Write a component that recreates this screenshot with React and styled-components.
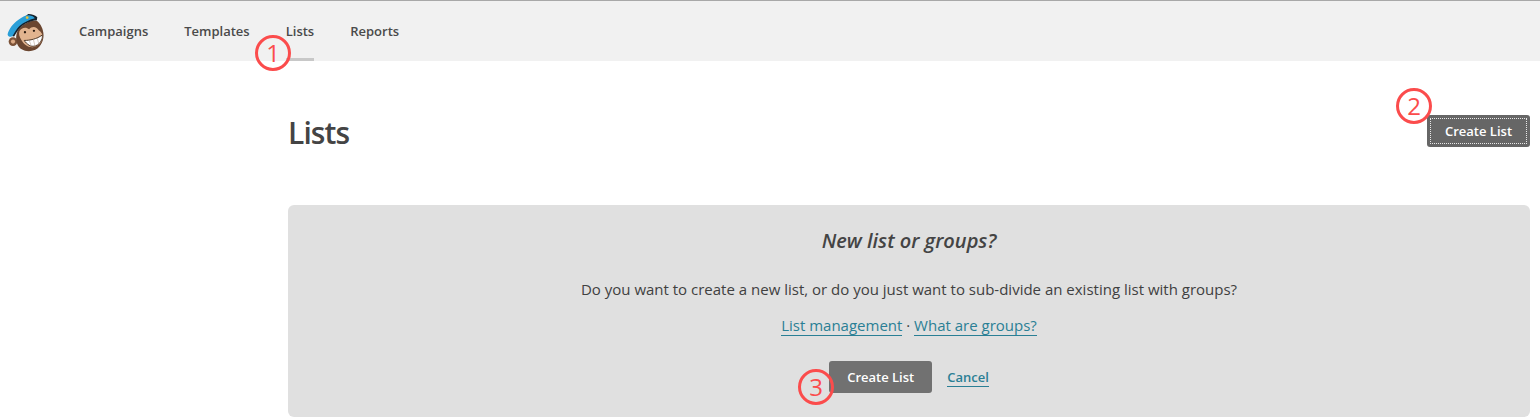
import React from 'react';
import styled, { createGlobalStyle } from 'styled-components';

const GlobalStyle = createGlobalStyle`
  html, body {
    margin: 0;
    padding: 0;
    background: #fff;
    font-family: "Open Sans", "Liberation Sans", sans-serif;
    color: #404040;
  }
`;

const Page = styled.div`
  width: 1540px;
  height: 418px;
  overflow: hidden;
  position: relative;
`;

const NavBar = styled.nav`
  display: flex;
  align-items: stretch;
  height: 60px;
  box-sizing: content-box;
  background: #f1f1f1;
  border-top: 1px solid #a8a8a8;
  padding-left: 5px;
`;

const LogoWrap = styled.div`
  display: flex;
  align-items: center;
  width: 74px;
  padding-top: 2px;
  box-sizing: border-box;
`;

const NavItems = styled.div`
  display: flex;
  gap: 36px;
`;

const NavItem = styled.a`
  display: flex;
  align-items: center;
  height: 60px;
  box-sizing: border-box;
  padding-top: 3px;
  font-size: 13px;
  font-weight: 600;
  color: #4a4a4a;
  border-bottom: 3px solid ${(p) => (p.$active ? '#c8c8c8' : 'transparent')};
`;

const Main = styled.main`
  padding: 0 10px 0 288px;
`;

const Header = styled.header`
  display: flex;
  justify-content: space-between;
  align-items: flex-start;
  height: 144px;
  padding-top: 54px;
  box-sizing: border-box;
`;

const Title = styled.h1`
  margin: 0;
  font-size: 30px;
  line-height: 36px;
  font-weight: 600;
  letter-spacing: -0.9px;
  color: #444;
`;

const Button = styled.button`
  display: inline-flex;
  align-items: center;
  justify-content: center;
  width: ${(p) => p.$width}px;
  height: 32px;
  padding: 0;
  border: 0;
  border-radius: 3px;
  background: ${(p) => (p.$focused ? '#666' : '#717171')};
  color: #fff;
  font-family: inherit;
  font-size: 13px;
  font-weight: 600;
  ${(p) => p.$focused && `
    outline: 1px dotted #e8e8e8;
    outline-offset: -4px;
  `}
`;

const Panel = styled.section`
  display: flex;
  flex-direction: column;
  align-items: center;
  height: 212px;
  box-sizing: border-box;
  padding-top: 22px;
  background: #e0e0e0;
  border-radius: 6px;
`;

const PanelTitle = styled.h2`
  margin: 0;
  font-size: 20px;
  line-height: 27px;
  font-weight: 600;
  font-style: italic;
  color: #444;
`;

const PanelText = styled.p`
  margin: 25px 0 0;
  font-size: 15px;
  line-height: 20px;
  color: #404040;
`;

const LinkRow = styled.p`
  margin: 16px 0 0;
  font-size: 15px;
  line-height: 20px;
  color: #404040;
`;

const TextLink = styled.a`
  color: #2a7f95;
  font-weight: ${(p) => (p.$bold ? 600 : 400)};
  font-size: ${(p) => (p.$bold ? '13px' : '15px')};
  border-bottom: 1px solid #2a7f95;
`;

const Actions = styled.div`
  display: flex;
  align-items: center;
  gap: 15px;
  margin-top: 26px;
`;

const Marker = styled.div`
  position: absolute;
  left: ${(p) => p.$x}px;
  top: ${(p) => p.$y}px;
  width: 36px;
  height: 36px;
  box-sizing: border-box;
  display: flex;
  align-items: center;
  justify-content: center;
  border: 3px solid #fb4c4c;
  border-radius: 50%;
  color: #fb4c4c;
  font-family: "Open Sans", sans-serif;
  font-size: 24px;
  line-height: 1;
`;

const Logo = () => (
  <svg width="40" height="44" viewBox="0 0 41.500 45.500">
    <circle cx="8.300" cy="32.700" r="4.500" fill="#7b5238" />
    <circle cx="8.300" cy="32.700" r="2.200" fill="#dcaa85" />
    <path d="M14 20 C18 15 27 10 33 11 C37 14 40 20 40 26 C40 33 36 40 29 42 C22 44 15 41 13 36 C11 31 11 25 14 20 Z" fill="#6b4630" />
    <path d="M15 22 C17 18 22 17 25 20 C28 16 33 17 35 21 C38 23 39.500 26 39 29 C38 34 34 38 29 38.500 C24 39 19 35 17 31 C15 28 14 25 15 22 Z" fill="#e2b48f" />
    <path d="M20 31.500 C26 31.500 33 30 38.500 26 C39.500 29 37.500 33 34 36 C31 38 27 38 25 36.500 C23 35 21 33.500 20 31.500 Z" fill="#fff" stroke="#3b2617" strokeWidth="0.9" />
    <path d="M25 31 L27 36.500 M29.500 30.500 L31 37 M33.500 29 L35 35" stroke="#b9a595" strokeWidth="0.6" />
    <circle cx="20.700" cy="23" r="1.200" fill="#2a1a10" />
    <circle cx="30" cy="21.500" r="1.200" fill="#2a1a10" />
    <path d="M24 4.200 C28 4.300 32 5.500 33.500 7.500 L33 10.500 C27 11 20 14 16 18 C13 21 11 25 9.500 27.500 L7 27 L15 12 Z" fill="#16232d" />
    <path d="M2.700 25 C4 20 8 14 14 10 C18 7 22 5 25 5.500 C28 6 30 7 31 8.500 C25 10 19 13 15 16.500 C12 19.500 10 23 8 26.700 C6.500 28.500 3 28 2.700 25 Z" fill="#2a9fd8" />
    <circle cx="23" cy="7.800" r="1.400" fill="#f2c230" />
  </svg>
);

export default function App() {
  return (
    <Page>
      <GlobalStyle />
      <NavBar>
        <LogoWrap>
          <Logo />
        </LogoWrap>
        <NavItems>
          <NavItem>Campaigns</NavItem>
          <NavItem>Templates</NavItem>
          <NavItem $active>Lists</NavItem>
          <NavItem>Reports</NavItem>
        </NavItems>
      </NavBar>
      <Main>
        <Header>
          <Title>Lists</Title>
          <Button $width={103} $focused>Create List</Button>
        </Header>
        <Panel>
          <PanelTitle>New list or groups?</PanelTitle>
          <PanelText>Do you want to create a new list, or do you just want to sub-divide an existing list with groups?</PanelText>
          <LinkRow>
            <TextLink>List management</TextLink> · <TextLink>What are groups?</TextLink>
          </LinkRow>
          <Actions>
            <Button $width={103}>Create List</Button>
            <TextLink $bold>Cancel</TextLink>
          </Actions>
        </Panel>
      </Main>
      <Marker $x={255} $y={35}>1</Marker>
      <Marker $x={1396} $y={88}>2</Marker>
      <Marker $x={798} $y={369}>3</Marker>
    </Page>
  );
}
